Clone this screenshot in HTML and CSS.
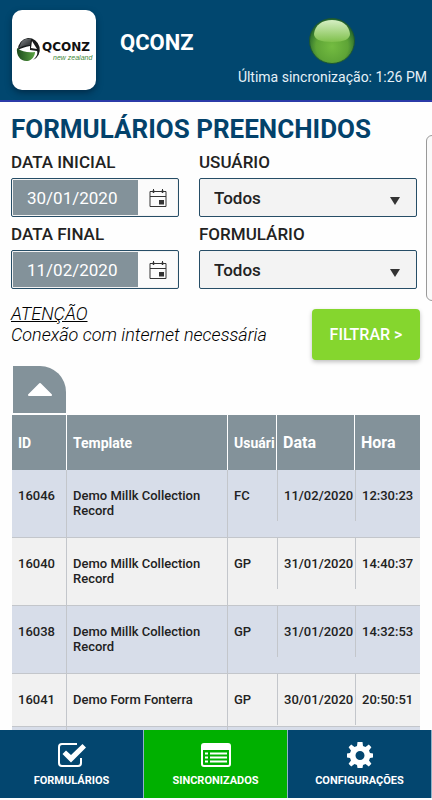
FILE: index.html
```html
<!DOCTYPE html>
<html lang="pt-BR">
<head>
<meta charset="utf-8">
<meta name="viewport" content="width=device-width, initial-scale=1">
<title>QCONZ</title>
<link rel="stylesheet" href="styles.css">
</head>
<body>
<header class="topbar">
  <svg class="logo" viewBox="0 0 84 80" role="img" aria-label="QCONZ new zealand">
    <defs>
      <linearGradient id="logoDark" x1="0" y1="0" x2="1" y2="1">
        <stop offset="0" stop-color="#8a8d90"/><stop offset=".7" stop-color="#3a3d3f"/>
      </linearGradient>
      <linearGradient id="logoGreen" x1="0" y1="0" x2="1" y2="0">
        <stop offset="0" stop-color="#1c4a1c"/><stop offset="1" stop-color="#5aa343"/>
      </linearGradient>
    </defs>
    <path d="M16 28A11.500 11.500 0 0 1 21 50C25 47 26 43 25 41L18 40V36C13 37 9 38 6 40A11.500 11.500 0 0 1 16 28Z" fill="#181b1c"/>
    <path d="M9 33C11 29 15 28 19 29L18 35C14 35 10 36 7 38Z" fill="url(#logoDark)"/>
    <path d="M20 31L25 39L19 38Z" fill="#fff"/>
    <path d="M5 38C4 46 9 52 16 51C20 50 23 46 23 42C17 43 10 42 5 38Z" fill="url(#logoGreen)"/>
    <text class="logo-name" x="30" y="41">QCONZ</text>
    <text class="logo-sub" x="41" y="50">new zealand</text>
  </svg>
  <h1 class="brand">QCONZ</h1>
  <div class="sync">
    <svg class="sync-light" viewBox="0 0 46 46" aria-hidden="true">
      <defs>
        <radialGradient id="ball" cx=".5" cy=".62" r=".55">
          <stop offset="0" stop-color="#74bc41"/><stop offset=".65" stop-color="#5ea436"/><stop offset="1" stop-color="#286a2c"/>
        </radialGradient>
        <linearGradient id="shine" x1="0" y1="0" x2="0" y2="1">
          <stop offset="0" stop-color="#d6efc4"/><stop offset="1" stop-color="#7fc04b"/>
        </linearGradient>
      </defs>
      <circle cx="23" cy="23" r="22.5" fill="url(#ball)" stroke="#1d5733"/>
      <path d="M5 16C6 7 13 2 23 2S40 7 41 16C41 21 35 24 23 24S5 21 5 16Z" fill="url(#shine)"/>
    </svg>
    <p class="sync-text">Última sincronização: 1:26 PM</p>
  </div>
</header>

<main class="content">
  <aside class="drawer" aria-hidden="true"></aside>
  <h2 class="title">FORMULÁRIOS PREENCHIDOS</h2>
  <form class="filters">
    <div class="field">
      <label for="start">DATA INICIAL</label>
      <div class="box date">
        <input id="start" type="text" value="30/01/2020">
        <button class="calendar" type="button" aria-label="Data inicial">
          <svg viewBox="0 0 18 20"><path d="M1 3.500H17V18.500H1ZM1 8.500H17M4.500 1V5M13.500 1V5" fill="none" stroke="#333"/><path d="M3.500 2.500H5.500V4.500H3.500ZM12.500 2.500H14.500V4.500H12.500ZM10 12H15V16.500H10Z" fill="#333"/></svg>
        </button>
      </div>
    </div>
    <div class="field">
      <label for="user">USUÁRIO</label>
      <div class="box">
        <select id="user"><option>Todos</option></select>
        <svg class="arrow" viewBox="0 0 10 8" aria-hidden="true"><path d="M0 0H10L5 8Z"/></svg>
      </div>
    </div>
    <div class="field">
      <label for="end">DATA FINAL</label>
      <div class="box date">
        <input id="end" type="text" value="11/02/2020">
        <button class="calendar" type="button" aria-label="Data final">
          <svg viewBox="0 0 18 20"><path d="M1 3.500H17V18.500H1ZM1 8.500H17M4.500 1V5M13.500 1V5" fill="none" stroke="#333"/><path d="M3.500 2.500H5.500V4.500H3.500ZM12.500 2.500H14.500V4.500H12.500ZM10 12H15V16.500H10Z" fill="#333"/></svg>
        </button>
      </div>
    </div>
    <div class="field">
      <label for="template">FORMULÁRIO</label>
      <div class="box">
        <select id="template"><option>Todos</option></select>
        <svg class="arrow" viewBox="0 0 10 8" aria-hidden="true"><path d="M0 0H10L5 8Z"/></svg>
      </div>
    </div>
  </form>
  <div class="actions">
    <p class="notice"><u>ATENÇÃO</u><br>Conexão com internet necessária</p>
    <button class="filter" type="button">FILTRAR &gt;</button>
  </div>
  <button class="collapse" type="button" aria-label="Recolher">
    <svg viewBox="0 0 26 15"><path d="M2 13L13 2L24 13Z" fill="#fff" stroke="#fff" stroke-width="2" stroke-linejoin="round"/></svg>
  </button>
  <table class="records">
    <colgroup><col class="c-id"><col><col class="c-user"><col class="c-date"><col class="c-time"></colgroup>
    <thead>
      <tr><th>ID</th><th>Template</th><th>Usuári</th><th class="large">Data</th><th class="large">Hora</th></tr>
    </thead>
    <tbody>
      <tr><td>16046</td><td>Demo Millk Collection Record</td><td>FC</td><td><div class="cell">11/02/2020</div></td><td><div class="cell">12:30:23</div></td></tr>
      <tr><td>16040</td><td>Demo Millk Collection Record</td><td>GP</td><td><div class="cell">31/01/2020</div></td><td><div class="cell">14:40:37</div></td></tr>
      <tr><td>16038</td><td>Demo Millk Collection Record</td><td>GP</td><td><div class="cell">31/01/2020</div></td><td><div class="cell">14:32:53</div></td></tr>
      <tr><td>16041</td><td>Demo Form Fonterra</td><td>GP</td><td><div class="cell">30/01/2020</div></td><td><div class="cell">20:50:51</div></td></tr>
      <tr><td>&nbsp;</td><td></td><td></td><td></td><td></td></tr>
    </tbody>
  </table>
</main>

<nav class="tabs">
  <a href="#formularios">
    <svg viewBox="0 0 30 28"><path d="M20 3H5Q2 3 2 6V22Q2 25 5 25H21Q24 25 24 22V17" fill="none" stroke="#fff" stroke-width="2"/><path d="M5.500 13L9 9.500L14 14L25.500 3L29 6.500L14 21.500Z" fill="#fff"/></svg>
    FORMULÁRIOS
  </a>
  <a href="#sincronizados" class="active" aria-current="page">
    <svg viewBox="0 0 30 28"><rect x="1" y="3" width="28" height="22" rx="2" fill="none" stroke="#fff" stroke-width="2"/><path d="M1 3H29V9H1Z" fill="#fff"/><path d="M4 12.500H7M4 16.500H7M4 20.500H7M9 12.500H26M9 16.500H26M9 20.500H26" stroke="#fff" stroke-width="2"/></svg>
    SINCRONIZADOS
  </a>
  <a href="#configuracoes">
    <svg viewBox="0 0 30 28"><path fill="#fff" fill-rule="evenodd" d="M12.500 1H17.500L18 5L20.500 6L23.800 3.600L26.400 6.200L24 9.500L25 12L28 12.500V16.500L25 17L24 19.500L26.400 22.800L23.800 25.400L20.500 23L18 24L17.500 27H12.500L12 24L9.500 23L6.200 25.400L3.600 22.800L6 19.500L5 17L2 16.500V12.500L5 12L6 9.500L3.600 6.200L6.200 3.600L9.500 6L12 5ZM15 10A4.500 4.500 0 1 0 15 19A4.500 4.500 0 1 0 15 10Z"/></svg>
    CONFIGURAÇÕES
  </a>
</nav>
</body>
</html>
```
FILE: styles.css
```css
* {
  box-sizing: border-box;
}

body {
  margin: 0;
  height: 100vh;
  display: flex;
  flex-direction: column;
  background: #fefefe;
  color: #222;
  font-family: Roboto, "Liberation Sans", sans-serif;
  overflow: hidden;
}

h1, h2, p {
  margin: 0;
}

button, input, select {
  font: inherit;
  margin: 0;
  border: 0;
  border-radius: 0;
}

.topbar {
  display: flex;
  align-items: flex-start;
  flex: none;
  padding: 10px 5px 10px 12px;
  background: #01476f;
  border-bottom: 2px solid #2b3aa8;
}

.logo {
  width: 84px;
  height: 80px;
  flex: none;
  background: #fff;
  border-radius: 10px;
  box-shadow: 0 3px 6px rgba(0, 20, 40, .5);
}

.logo-name {
  font: bold 12px "DejaVu Sans", sans-serif;
  fill: #111;
}

.logo-sub {
  font: italic 7px "Liberation Sans", sans-serif;
  fill: #3f8a3a;
}

.brand {
  margin: 20px 0 0 24px;
  color: #fff;
  font-size: 22px;
  line-height: 26px;
  font-weight: 700;
}

.sync {
  margin: 8px 0 0 auto;
  display: flex;
  flex-direction: column;
  align-items: center;
  color: #e6f1f8;
}

.sync-light {
  width: 46px;
  height: 46px;
}

.sync-text {
  margin-top: 2px;
  font-size: 14px;
  line-height: 22px;
}

.content {
  flex: 1;
  min-height: 0;
  position: relative;
  overflow: hidden;
  padding: 12px 12px 0 11px;
}

.drawer {
  position: absolute;
  top: 33px;
  right: -8px;
  width: 14px;
  height: 166px;
  border: 1px solid #999;
  border-radius: 6px;
  background: #fafafa;
}

.title {
  color: #03426b;
  font-size: 26px;
  line-height: 30px;
  font-weight: 700;
}

.filters {
  display: grid;
  grid-template-columns: minmax(0, 168fr) minmax(0, 218fr);
  column-gap: 20px;
  row-gap: 5px;
  margin: 6px 3px 0 0;
}

.field label {
  display: block;
  font-size: 17px;
  line-height: 24px;
  font-weight: 500;
  margin-bottom: 4px;
}

.box {
  position: relative;
  display: flex;
  height: 39px;
  border: 1px solid #264d66;
  border-radius: 2px;
  background: #f3f3f3;
}

.date {
  padding: 1px;
}

.date input {
  flex: 1;
  min-width: 0;
  padding: 0 14px;
  background: #83929a;
  color: #fff;
  font-size: 17px;
}

.calendar {
  width: 39px;
  padding: 0;
  display: grid;
  place-items: center;
  background: #fbfbfb;
}

.calendar svg {
  width: 18px;
  height: 20px;
}

.box select {
  flex: 1;
  padding: 0 14px;
  appearance: none;
  background: transparent;
  color: #222;
  font-size: 17px;
  font-weight: 500;
}

.arrow {
  position: absolute;
  right: 16px;
  top: 18px;
  width: 10px;
  height: 8px;
  fill: #333;
  pointer-events: none;
}

.actions {
  display: flex;
  justify-content: space-between;
  align-items: flex-start;
  margin-top: 14px;
}

.notice {
  color: #000;
  font-size: 18px;
  line-height: 21px;
  font-style: italic;
  font-weight: 300;
}

.filter {
  width: 108px;
  height: 51px;
  margin-top: 6px;
  border-radius: 4px;
  background: #85d62e;
  color: #fff;
  font-size: 16px;
  font-weight: 500;
  box-shadow: 0 2px 4px rgba(0, 0, 0, .25);
}

.collapse {
  display: grid;
  place-items: center;
  width: 53px;
  height: 47px;
  margin: 6px 0 2px 2px;
  padding: 0;
  background: #83929a;
  border-top-right-radius: 26px;
}

.collapse svg {
  width: 26px;
  height: 15px;
}

.records {
  width: calc(100% - 1px);
  margin-left: 1px;
  table-layout: fixed;
  border-collapse: separate;
  border-spacing: 0;
}

.c-id { width: 55px; }
.c-user { width: 49px; }
.c-date { width: 78px; }
.c-time { width: 65px; }

.records th {
  height: 55px;
  padding: 0 0 0 6px;
  overflow: hidden;
  white-space: nowrap;
  text-align: left;
  background: #83929a;
  border-right: 1px solid #fff;
  color: #fff;
  font-size: 14px;
  line-height: 18px;
  font-weight: 700;
}

.records th.large {
  font-size: 16px;
}

.records td {
  padding: 18px 6px 19px;
  vertical-align: top;
  background: #d7dde9;
  border-right: 1px solid #c3c6cb;
  border-bottom: 1px solid #c3c6cb;
  font-size: 13px;
  line-height: 15px;
  font-weight: 500;
}

.records tr:nth-child(even) td {
  background: #f1f1f1;
}

.records td:nth-child(n+3) {
  border-right: 0;
}

.records td:nth-child(n+4) {
  padding: 0;
}

.records th:last-child {
  border-right: 0;
}

.cell {
  height: 51px;
  padding: 18px 0 0 6px;
  border-left: 1px solid #c3c6cb;
}

.tabs {
  flex: none;
  display: grid;
  grid-template-columns: repeat(3, 1fr);
  margin-bottom: 2px;
}

.tabs a {
  display: flex;
  flex-direction: column;
  align-items: center;
  height: 68px;
  padding-top: 11px;
  background: #03466f;
  border-right: 1px solid #8fb3c8;
  color: #fff;
  font-size: 11px;
  line-height: 14px;
  font-weight: 700;
  text-decoration: none;
}

.tabs .active {
  background: #00b000;
}

.tabs svg {
  width: 30px;
  height: 28px;
  margin-bottom: 5px;
}
```
